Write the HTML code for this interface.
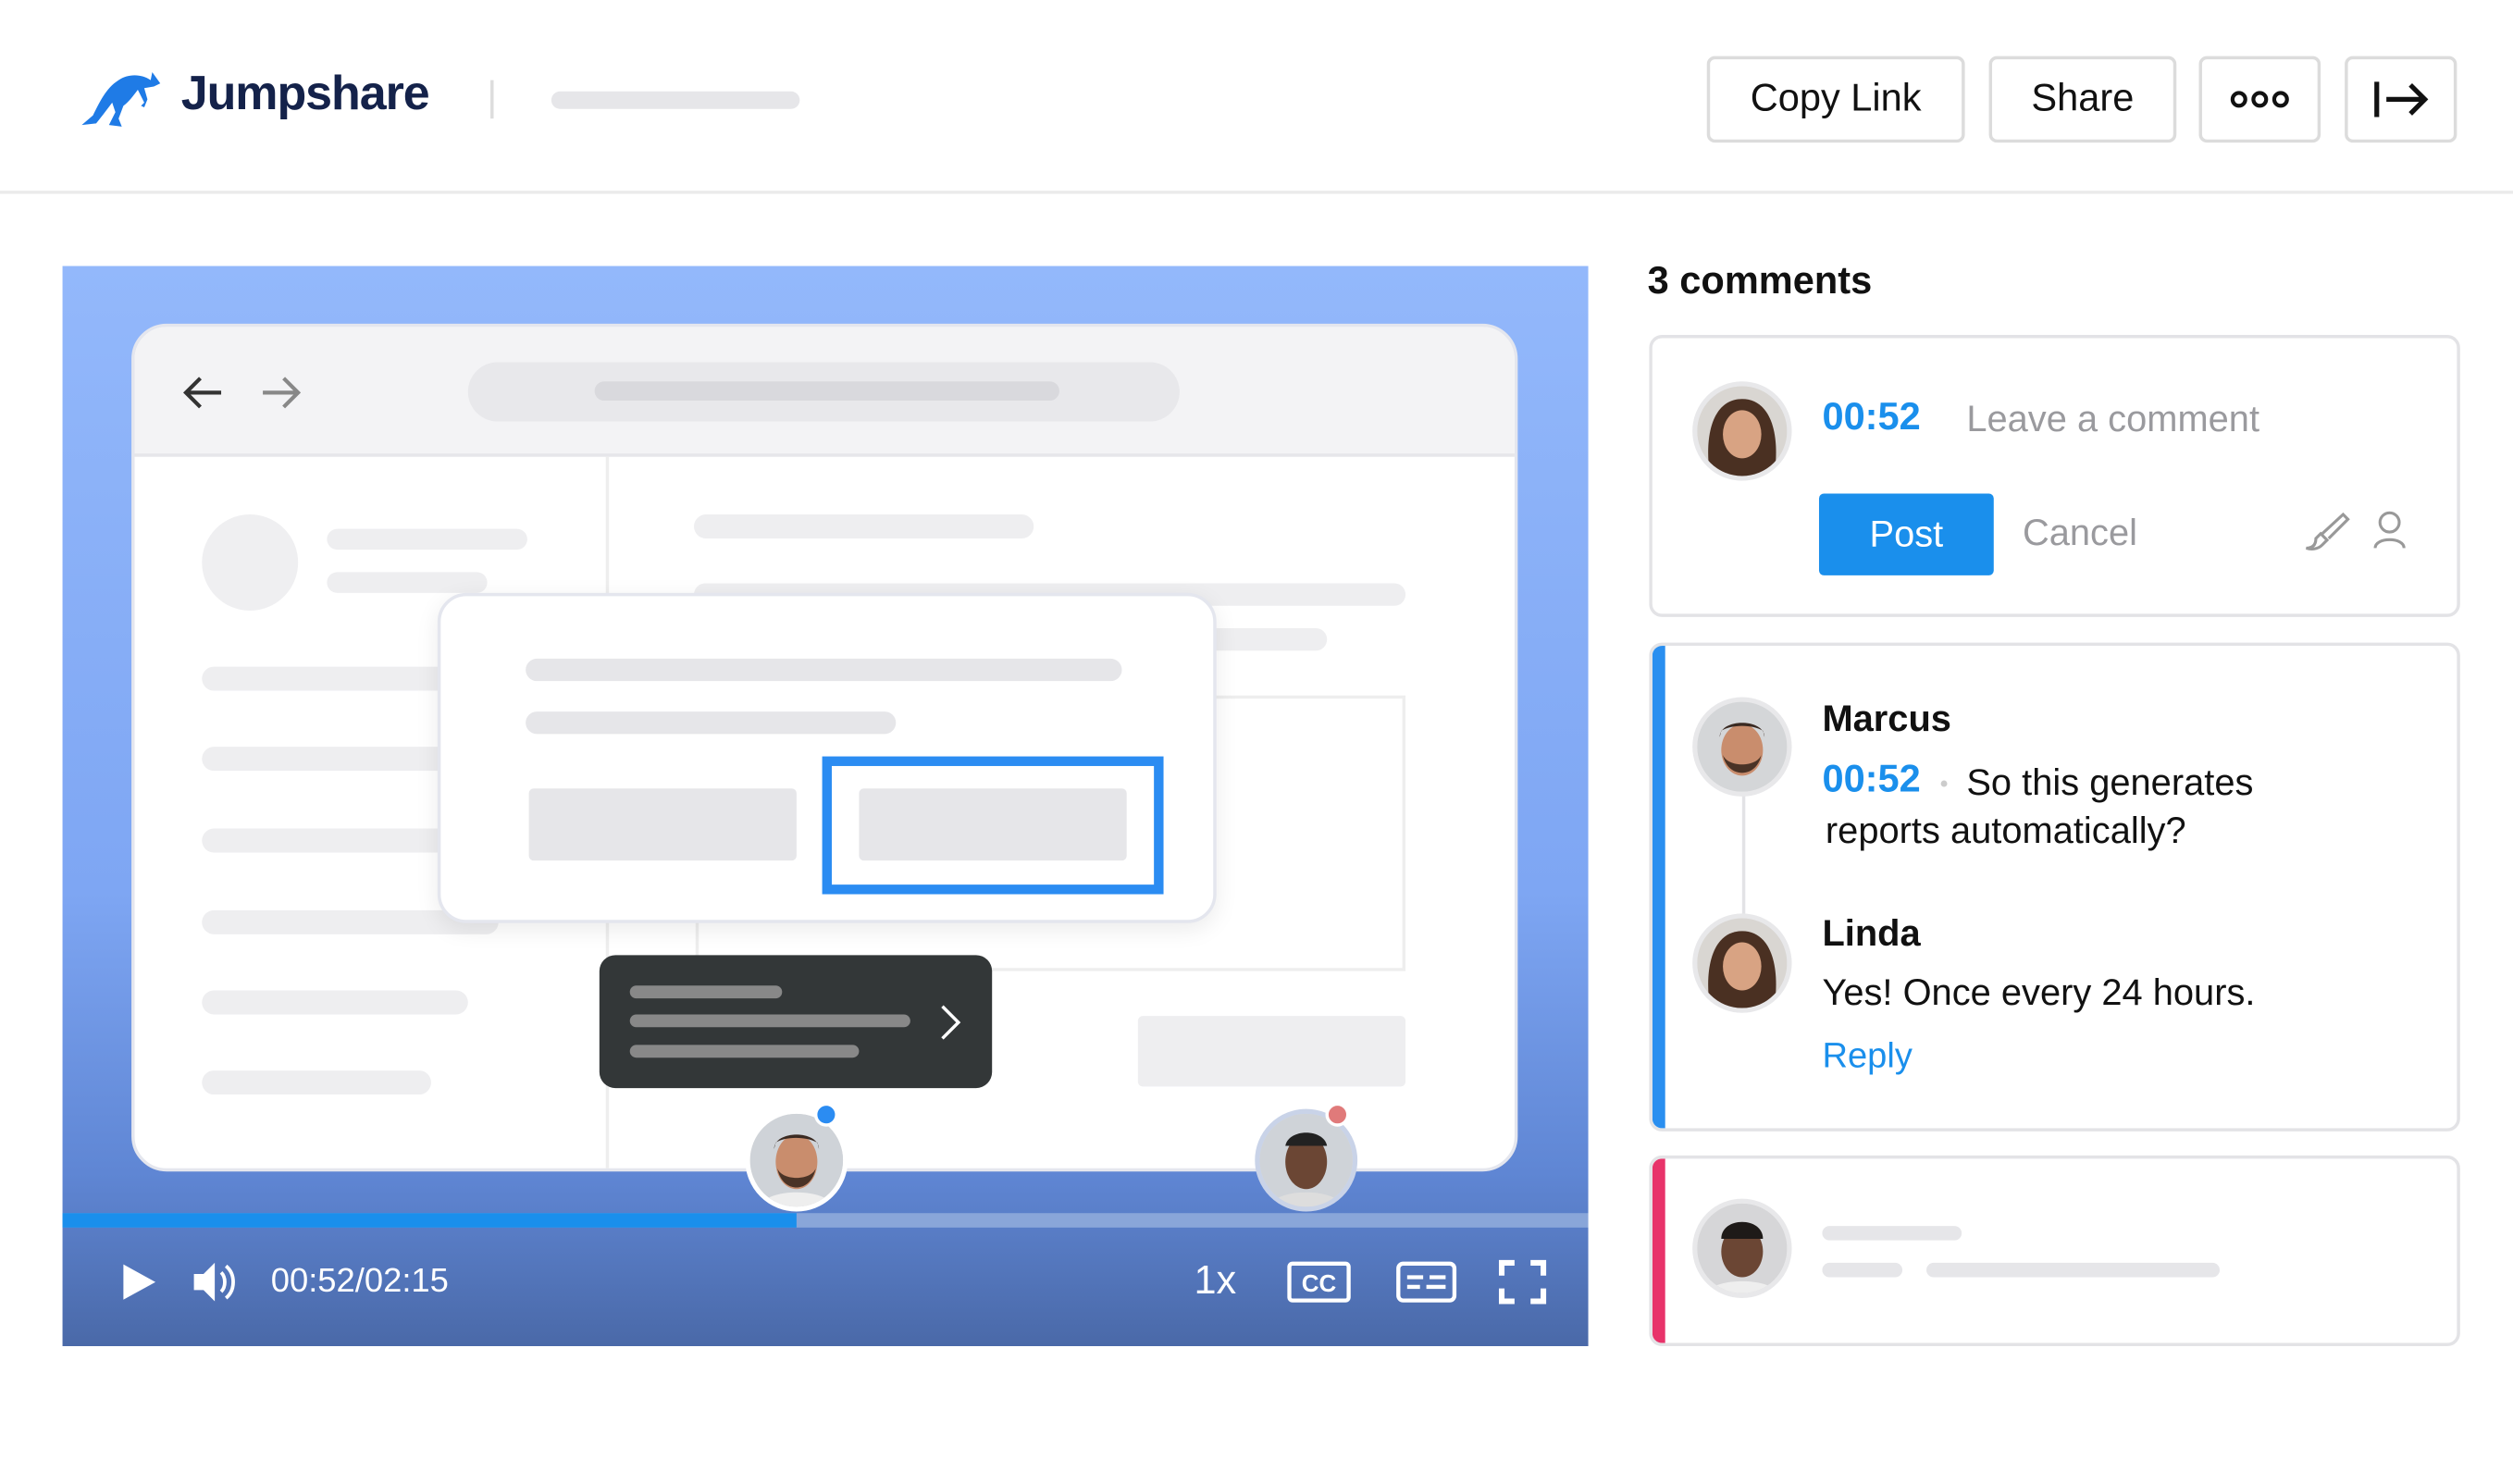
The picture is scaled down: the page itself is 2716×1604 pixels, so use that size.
<!DOCTYPE html>
<html><head><meta charset="utf-8"><style>
*{margin:0;padding:0;box-sizing:border-box}
html,body{width:2716px;height:1604px;overflow:hidden;background:#fff}
#w{position:absolute;left:0;top:0;width:1568px;height:926px;transform:scale(1.73214);transform-origin:0 0;font-family:"Liberation Sans",sans-serif;color:#111}
.a{position:absolute}
.btn{position:absolute;top:35px;height:54px;border:2px solid #dcdcdc;border-radius:5px;font-size:24px;display:flex;align-items:center;justify-content:center;color:#111}
.bar{position:absolute;background:#e6e6e9;border-radius:8px}
.box{position:absolute;left:1029px;width:506px;border:2px solid #e3e3e6;border-radius:8px;background:#fff;overflow:hidden}
.av{position:absolute;width:62px;height:62px;border-radius:50%;border:3px solid #e8e8ea;overflow:hidden;background:#ddd}
</style></head><body><div id="w">
<svg class="a" style="left:50px;top:44px" width="52" height="36" viewBox="0 0 52 36"><path d="M50 8 L45 1 L44 6 C38 2 30 2 24 6 C16 11 12 20 8 28 L1 34 L10 33 C14 28 17 24 20 20 L22 26 L18 34 L26 35 L24 30 L27 22 C30 20 33 16 36 12 L40 20 L38 22 L40 23 L42 18 L40 11 L46 10 Z" fill="#1f7be6"/></svg>
<div class="a" style="left:113px;top:42px;font-size:30px;font-weight:bold;color:#14224a;letter-spacing:-0.6px">Jumpshare</div>
<div class="a" style="left:306px;top:50px;width:2px;height:24px;background:#ddd"></div>
<div class="bar" style="left:344px;top:57px;width:155px;height:11px"></div>
<div class="btn" style="left:1065px;width:161px">Copy Link</div>
<div class="btn" style="left:1241px;width:117px">Share</div>
<div class="btn" style="left:1372px;width:76px"><svg width="40" height="14"><g fill="none" stroke="#111" stroke-width="2.4"><circle cx="7" cy="7" r="4"/><circle cx="20" cy="7" r="4"/><circle cx="33" cy="7" r="4"/></g></svg></div>
<div class="btn" style="left:1463px;width:70px"><svg width="36" height="26"><g fill="none" stroke="#111" stroke-width="3"><path d="M3 2V24M9 13H33M24 4L33 13L24 22"/></g></svg></div>
<div class="a" style="left:0;top:119px;width:1568px;height:2px;background:#ebebeb"></div>
<div class="a" style="left:39px;top:166px;width:952px;height:674px;background:linear-gradient(180deg,#93b8fb 0%,#7ea6f3 58%,#5f86d4 84%,#4a69a8 100%);overflow:hidden">
 <div class="a" style="left:43px;top:36px;width:865px;height:529px;background:#fff;border-radius:22px;border:2px solid #e4e6ee;overflow:hidden">
  <div class="a" style="left:0;top:0;width:865px;height:81px;background:#f3f3f5;border-bottom:2px solid #e6e6ea"></div>
  <svg class="a" style="left:28px;top:28px" width="80" height="26"><g fill="none" stroke-width="2.4"><path d="M26 13H4M13 4L4 13L13 22" stroke="#333"/><path d="M52 13H74M65 4L74 13L65 22" stroke="#888"/></g></svg>
  <div class="a" style="left:208px;top:22px;width:444px;height:37px;border-radius:19px;background:#e8e8eb"></div>
  <div class="bar" style="left:287px;top:34px;width:290px;height:12px;background:#d9d9dd"></div>
  <div class="a" style="left:294px;top:81px;width:2px;height:450px;background:#eee"></div>
  <div class="a" style="left:42px;top:117px;width:60px;height:60px;border-radius:50%;background:#efeff1"></div>
  <div class="bar" style="left:120px;top:126px;width:125px;height:13px;background:#eeeef0"></div>
  <div class="bar" style="left:120px;top:153px;width:100px;height:13px;background:#eeeef0"></div>
  <div class="bar" style="left:42px;top:212px;width:180px;height:15px;background:#eeeef0"></div>
  <div class="bar" style="left:42px;top:262px;width:180px;height:15px;background:#eeeef0"></div>
  <div class="bar" style="left:42px;top:313px;width:180px;height:15px;background:#eeeef0"></div>
  <div class="bar" style="left:42px;top:364px;width:185px;height:15px;background:#eeeef0"></div>
  <div class="bar" style="left:42px;top:414px;width:166px;height:15px;background:#eeeef0"></div>
  <div class="bar" style="left:42px;top:464px;width:143px;height:15px;background:#eeeef0"></div>
  <div class="bar" style="left:349px;top:117px;width:212px;height:15px;background:#eeeef0"></div>
  <div class="bar" style="left:349px;top:160px;width:444px;height:14px;background:#eeeef0"></div>
  <div class="bar" style="left:660px;top:188px;width:84px;height:14px;background:#eeeef0"></div>
  <div class="a" style="left:350px;top:230px;width:443px;height:172px;border:2px solid #eee"></div>
  <div class="a" style="left:626px;top:430px;width:167px;height:44px;background:#eeeef0;border-radius:3px"></div>
 </div>
 <div class="a" style="left:234px;top:204px;width:486px;height:206px;background:#fff;border-radius:18px;border:2px solid #e4e6ee;box-shadow:0 4px 14px rgba(0,0,0,.08)">
  <div class="bar" style="left:53px;top:39px;width:372px;height:14px"></div>
  <div class="bar" style="left:53px;top:72px;width:231px;height:14px"></div>
  <div class="a" style="left:55px;top:120px;width:167px;height:45px;background:#e6e6e9;border-radius:3px"></div>
  <div class="a" style="left:238px;top:100px;width:213px;height:86px;border:6px solid #2b8cf2"></div>
  <div class="a" style="left:261px;top:120px;width:167px;height:45px;background:#e6e6e9;border-radius:3px"></div>
 </div>
 <div class="a" style="left:335px;top:430px;width:245px;height:83px;background:#333738;border-radius:10px">
  <div class="bar" style="left:19px;top:19px;width:95px;height:8px;background:#888"></div>
  <div class="bar" style="left:19px;top:37px;width:175px;height:8px;background:#888"></div>
  <div class="bar" style="left:19px;top:56px;width:143px;height:8px;background:#888"></div>
  <svg class="a" style="left:212px;top:30px" width="14" height="24"><path d="M2 2L12 12L2 22" fill="none" stroke="#fff" stroke-width="2"/></svg>
 </div>
 <div class="a" style="left:0;top:591px;width:952px;height:9px;background:#89a6d9"></div>
 <div class="a" style="left:0;top:591px;width:458px;height:9px;background:#1a8fec"></div>
 <div class="av" style="left:426px;top:526px;width:64px;height:64px;border-color:#fff"><svg width="58" height="58"><rect width="58" height="58" fill="#cfd3d8"/><ellipse cx="29" cy="30" rx="13" ry="17" fill="#c98d6d"/><path d="M15 22C15 10 43 10 43 22L42 18C35 14 22 14 16 18Z" fill="#3a2a22"/><path d="M17 34C20 50 38 50 41 34C38 42 20 42 17 34Z" fill="#4a3326"/><path d="M6 58C10 46 48 46 52 58Z" fill="#eee"/></svg></div>
 <div class="a" style="left:469px;top:522px;width:15px;height:15px;border-radius:50%;background:#2b8cf2;border:2px solid #fff"></div>
 <div class="av" style="left:744px;top:526px;width:64px;height:64px;border-color:#c9d3e8"><svg width="58" height="58"><rect width="58" height="58" fill="#cfd3d8"/><ellipse cx="29" cy="30" rx="13" ry="17" fill="#6b4634"/><path d="M16 20C18 9 40 9 42 20Z" fill="#222"/><path d="M6 58C10 46 48 46 52 58Z" fill="#ddd"/></svg></div>
 <div class="a" style="left:788px;top:522px;width:15px;height:15px;border-radius:50%;background:#e07a7a;border:2px solid #fff"></div>
 <svg class="a" style="left:36px;top:622px" width="24" height="24"><path d="M2 1L22 12L2 23Z" fill="#fff"/></svg>
 <svg class="a" style="left:80px;top:620px" width="30" height="28"><path d="M2 9H8L15 2V26L8 19H2Z" fill="#fff"/><path d="M19 8C22 11 22 17 19 20M22 4C28 9 28 19 22 24" fill="none" stroke="#fff" stroke-width="2.2"/></svg>
 <div class="a" style="left:130px;top:622px;font-size:21px;color:#fff">00:52/02:15</div>
 <div class="a" style="left:706px;top:619px;font-size:25px;color:#fff">1x</div>
 <svg class="a" style="left:764px;top:621px" width="40" height="26"><rect x="1.5" y="1.5" width="37" height="23" rx="2" fill="none" stroke="#fff" stroke-width="2.5"/><text x="20" y="19" font-size="15" font-weight="bold" fill="#fff" text-anchor="middle" font-family="Liberation Sans">CC</text></svg>
 <svg class="a" style="left:832px;top:621px" width="38" height="26"><rect x="1.5" y="1.5" width="35" height="23" rx="3" fill="none" stroke="#fff" stroke-width="2.5"/><path d="M7 10H17M21 10H31M7 16H15M19 16H31" stroke="#fff" stroke-width="2.5"/></svg>
 <svg class="a" style="left:896px;top:620px" width="30" height="28"><path d="M2 10V2H10M20 2H28V10M28 18V26H20M10 26H2V18" fill="none" stroke="#fff" stroke-width="3.5"/></svg>
</div>
<div class="a" style="left:1028px;top:162px;font-size:24px;font-weight:bold">3 comments</div>
<div class="box" style="top:209px;height:176px">
 <div class="av" style="left:25px;top:27px"><svg width="56" height="56"><rect width="56" height="56" fill="#d9d6d2"/><path d="M8 56C4 30 10 8 28 8C46 8 52 30 48 56Z" fill="#4a3022"/><ellipse cx="28" cy="30" rx="12" ry="15" fill="#d8a383"/></svg></div>
 <div class="a" style="left:106px;top:36px;font-size:24px;font-weight:bold;color:#1a8fec">00:52</div>
 <div class="a" style="left:196px;top:37px;font-size:23px;color:#9a9a9e">Leave a comment</div>
 <div class="a" style="left:104px;top:97px;width:109px;height:51px;background:#1a8fec;border-radius:3px;color:#fff;font-size:23px;display:flex;align-items:center;justify-content:center">Post</div>
 <div class="a" style="left:231px;top:108px;font-size:23px;color:#9a9a9e">Cancel</div>
 <svg class="a" style="left:404px;top:107px" width="32" height="28"><path d="M4 24C8 24 10 22 10 18L13 15L17 19L14 22C11 25 7 25 4 24ZM14 15L27 3L30 6L18 18" fill="none" stroke="#999" stroke-width="1.8"/></svg>
 <svg class="a" style="left:449px;top:107px" width="22" height="26"><circle cx="11" cy="8" r="6" fill="none" stroke="#999" stroke-width="1.8"/><path d="M2 24C2 17 20 17 20 24" fill="none" stroke="#999" stroke-width="1.8"/></svg>
</div>
<div class="box" style="top:401px;height:305px">
 <div class="a" style="left:0;top:0;width:8px;height:305px;background:#2a8ff0"></div>
 <div class="a" style="left:56px;top:90px;width:2px;height:80px;background:#e3e3e6"></div>
 <div class="av" style="left:25px;top:32px"><svg width="56" height="56"><rect width="56" height="56" fill="#d4d6d8"/><ellipse cx="28" cy="30" rx="13" ry="16" fill="#c98d6d"/><path d="M14 22C14 10 42 10 42 22L41 18C34 14 22 14 15 18Z" fill="#3a2a22"/><path d="M16 33C19 48 37 48 40 33C37 41 19 41 16 33Z" fill="#4a3326"/></svg></div>
 <div class="a" style="left:106px;top:32px;font-size:23px;font-weight:bold">Marcus</div>
 <div class="a" style="left:106px;top:70px;font-size:24px;font-weight:bold;color:#1a8fec">00:52</div>
 <div class="a" style="left:180px;top:84px;width:4px;height:4px;border-radius:50%;background:#ccc"></div>
 <div class="a" style="left:196px;top:70px;font-size:23px;line-height:30px;width:300px;color:#111">So this generates</div>
 <div class="a" style="left:108px;top:100px;font-size:23px;line-height:30px;color:#111">reports automatically?</div>
 <div class="av" style="left:25px;top:167px"><svg width="56" height="56"><rect width="56" height="56" fill="#d9d6d2"/><path d="M8 56C4 30 10 8 28 8C46 8 52 30 48 56Z" fill="#4a3022"/><ellipse cx="28" cy="30" rx="12" ry="15" fill="#d8a383"/></svg></div>
 <div class="a" style="left:106px;top:166px;font-size:23px;font-weight:bold">Linda</div>
 <div class="a" style="left:106px;top:203px;font-size:23px">Yes! Once every 24 hours.</div>
 <div class="a" style="left:106px;top:243px;font-size:22px;color:#1a8fec">Reply</div>
</div>
<div class="box" style="top:721px;height:119px">
 <div class="a" style="left:0;top:0;width:8px;height:119px;background:#e8336a"></div>
 <div class="av" style="left:25px;top:25px"><svg width="56" height="56"><rect width="56" height="56" fill="#d6d6d8"/><ellipse cx="28" cy="30" rx="13" ry="16" fill="#6b4634"/><path d="M15 22C15 8 41 8 41 22Z" fill="#1e1a18"/><path d="M6 56C10 46 46 46 50 56Z" fill="#eee"/></svg></div>
 <div class="bar" style="left:106px;top:42px;width:87px;height:9px"></div>
 <div class="bar" style="left:106px;top:65px;width:50px;height:9px"></div>
 <div class="bar" style="left:171px;top:65px;width:183px;height:9px"></div>
</div>
</div></body></html>
